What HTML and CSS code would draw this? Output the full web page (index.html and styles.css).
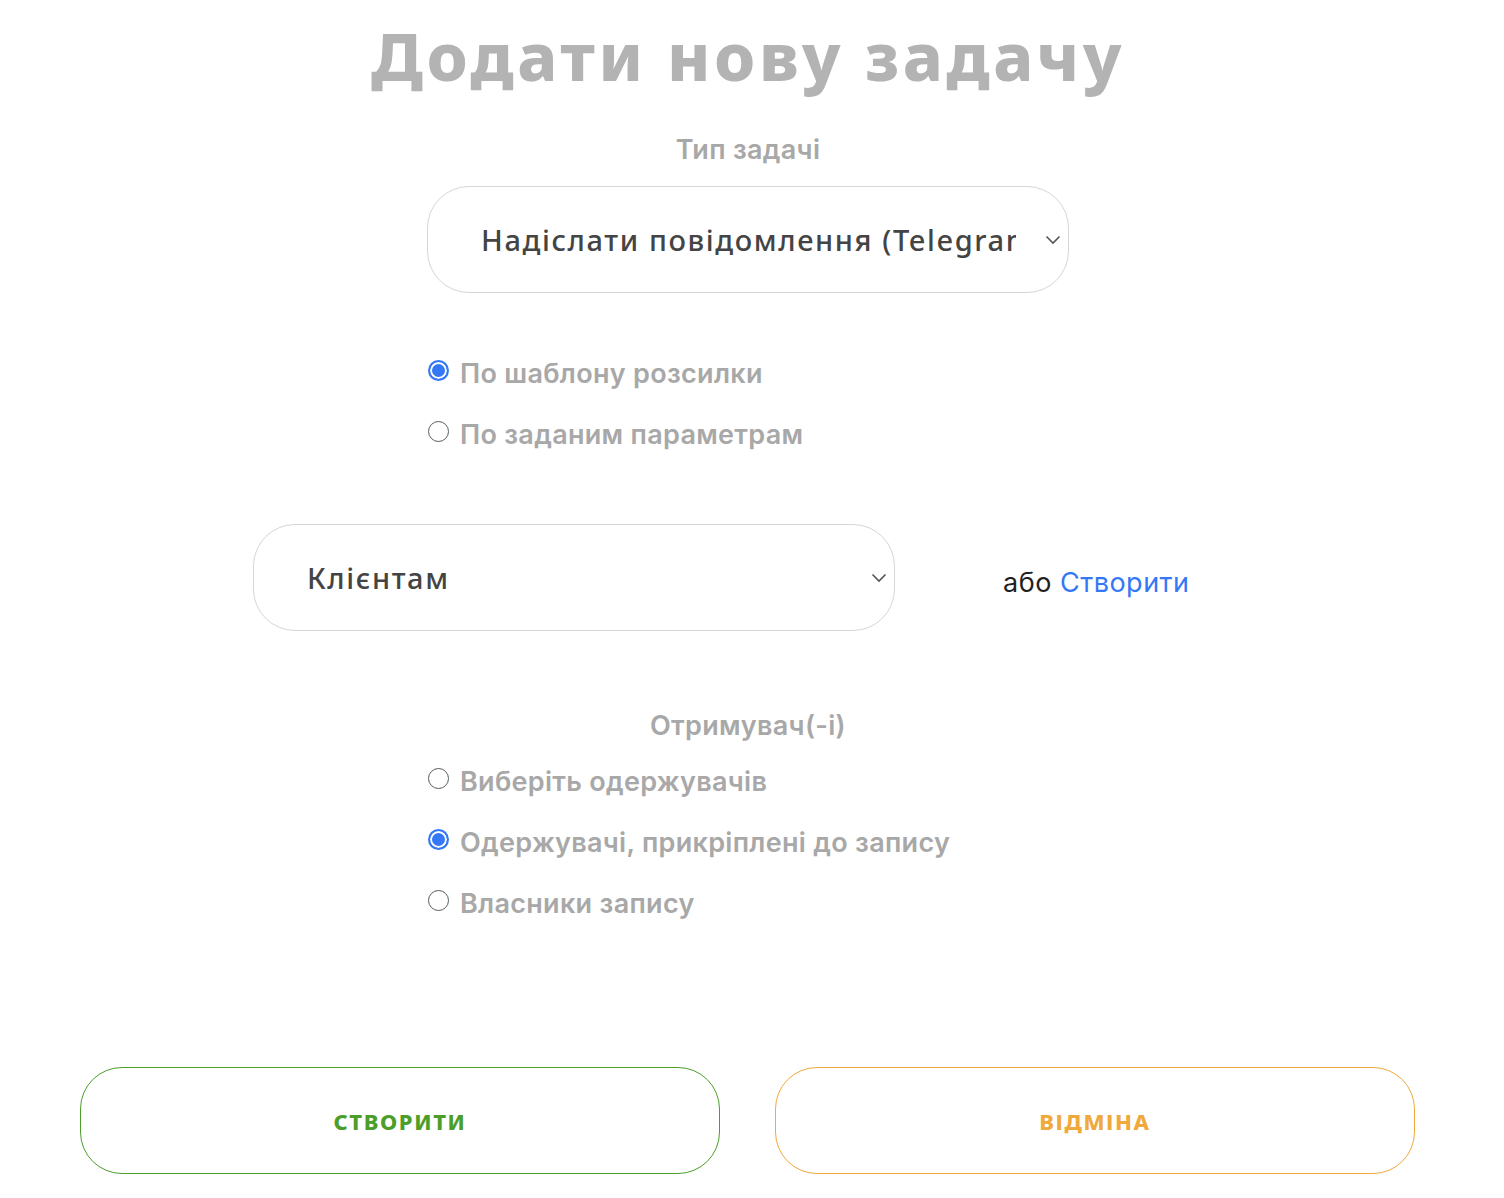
FILE: index.html
```html
<!DOCTYPE html>
<html lang="uk">
<head>
<meta charset="utf-8">
<title>Додати нову задачу</title>
<link rel="stylesheet" href="styles.css">
</head>
<body>
<main class="page">
  <h1 class="title">Додати нову задачу</h1>

  <div class="field-label">Тип задачі</div>
  <div class="select-wrap select-wrap--center">
    <select class="select">
      <option>Надіслати повідомлення (Telegram)</option>
    </select>
    <svg class="chevron" width="16" height="10" viewBox="0 0 16 10"><path d="M1.5 1.5 L8 8 L14.5 1.5" fill="none" stroke="#555" stroke-width="1.6"/></svg>
  </div>

  <div class="radio-group radio-group--mode">
    <label class="radio"><input type="radio" name="mode" checked><span>По шаблону розсилки</span></label>
    <label class="radio"><input type="radio" name="mode"><span>По заданим параметрам</span></label>
  </div>

  <div class="template-row">
    <div class="select-wrap">
      <select class="select">
        <option>Клієнтам</option>
      </select>
      <svg class="chevron" width="16" height="10" viewBox="0 0 16 10"><path d="M1.5 1.5 L8 8 L14.5 1.5" fill="none" stroke="#555" stroke-width="1.6"/></svg>
    </div>
    <div class="or-create">або <a href="#" class="link">Створити</a></div>
  </div>

  <div class="field-label field-label--recipients">Отримувач(-і)</div>
  <div class="radio-group radio-group--recipients">
    <label class="radio"><input type="radio" name="rcpt"><span>Виберіть одержувачів</span></label>
    <label class="radio"><input type="radio" name="rcpt" checked><span>Одержувачі, прикріплені до запису</span></label>
    <label class="radio"><input type="radio" name="rcpt"><span>Власники запису</span></label>
  </div>

  <div class="actions">
    <button class="btn btn--create" type="button">Створити</button>
    <button class="btn btn--cancel" type="button">Відміна</button>
  </div>
</main>
</body>
</html>
```

FILE: styles.css
```css
* { box-sizing: border-box; }

html, body {
  margin: 0;
  padding: 0;
  background: #fff;
}

body {
  font-family: Inter, Roboto, "Liberation Sans", sans-serif;
}

.page {
  width: 1496px;
  display: flex;
  flex-direction: column;
  padding-bottom: 24px;
}

.title {
  margin: 14px 0 0;
  text-align: center;
  font-family: "Noto Sans", "DejaVu Sans", sans-serif;
  font-weight: 800;
  font-size: 66px;
  line-height: 82px;
  color: #b3b3b3;
  letter-spacing: 3.5px;
}

.field-label {
  margin-top: 36px;
  text-align: center;
  font-size: 27px;
  font-weight: 600;
  letter-spacing: 0.3px;
  line-height: 36px;
  color: #a8a8a8;
}

.field-label--recipients {
  margin-top: 77px;
}

.select-wrap {
  position: relative;
  width: 642px;
  height: 107px;
}

.select-wrap--center {
  margin: 18px auto 0;
}

.select {
  appearance: none;
  -webkit-appearance: none;
  width: 100%;
  height: 100%;
  border: 1px solid #d6d6d6;
  border-radius: 42px;
  background: #fff;
  padding: 0 52px 0 53px;
  font-family: "Noto Sans", "Open Sans", sans-serif;
  font-size: 29px;
  font-weight: 500;
  letter-spacing: 1.6px;
  color: #444;
  outline: none;
}

.chevron {
  position: absolute;
  right: 8px;
  top: 49px;
  pointer-events: none;
}

.radio-group {
  width: 642px;
  margin: 47px auto 0;
  display: flex;
  flex-direction: column;
}

.radio-group--recipients {
  margin-top: 4px;
}

.radio {
  height: 61px;
  display: flex;
  align-items: center;
  gap: 11px;
  font-size: 27px;
  font-weight: 600;
  letter-spacing: 0.3px;
  color: #a8a8a8;
}

.radio span {
  position: relative;
  top: 3px;
}

.radio input {
  appearance: none;
  -webkit-appearance: none;
  margin: 0 0 0 1px;
  width: 21px;
  height: 21px;
  border-radius: 50%;
  border: 1.5px solid #5a5a5a;
  background: #fff;
  flex: none;
}

.radio input:checked {
  border: 2px solid #3478f6;
  background: #3478f6;
  box-shadow: inset 0 0 0 2px #fff;
}

.template-row {
  margin-top: 62px;
  padding-left: 253px;
  display: flex;
  align-items: center;
  gap: 108px;
}

.or-create {
  font-size: 27px;
  letter-spacing: 0.5px;
  color: #1f1f1f;
  padding-top: 10px;
}

.link {
  color: #3478f6;
  text-decoration: none;
}

.actions {
  margin-top: 136px;
  padding: 0 81px 0 80px;
  display: flex;
  gap: 55px;
}

.btn {
  width: 640px;
  height: 107px;
  border-radius: 42px;
  background: #fff;
  font-family: "Noto Sans", "Open Sans", sans-serif;
  font-weight: 800;
  font-size: 22px;
  text-transform: uppercase;
  letter-spacing: 1.6px;
  cursor: pointer;
}

.btn--create {
  border: 1px solid #4c9e2b;
  color: #4c9e2b;
}

.btn--cancel {
  border: 1px solid #f0a93b;
  color: #f0a93b;
}
```
